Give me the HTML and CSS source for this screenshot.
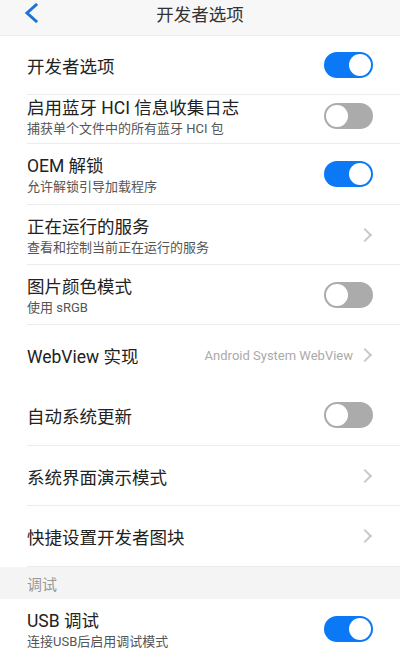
FILE: index.html
```html
<!DOCTYPE html>
<html lang="zh-CN">
<head>
  <meta charset="UTF-8">
  <meta name="viewport" content="width=device-width, initial-scale=1.0">
  <title>开发者选项</title>
  <link rel="stylesheet" href="styles.css">
</head>
<body>
<div class="topbar">
  <svg class="back" width="16" height="20" viewBox="0 0 16 20">
    <polyline points="12,2 3,10 12,18" fill="none" stroke="#1a74d6" stroke-width="3" stroke-linecap="square"/>
  </svg>
  <div class="topbar-title">开发者选项</div>
</div>

<div class="list">
  <div class="row r1">
    <div class="row-text"><div class="row-title">开发者选项</div></div>
    <div class="switch on"></div>
  </div>
  <div class="row r2">
    <div class="row-text">
      <div class="row-title">启用蓝牙 HCI 信息收集日志</div>
      <div class="row-sub">捕获单个文件中的所有蓝牙 HCI 包</div>
    </div>
    <div class="switch"></div>
  </div>
  <div class="row r3">
    <div class="row-text">
      <div class="row-title">OEM 解锁</div>
      <div class="row-sub">允许解锁引导加载程序</div>
    </div>
    <div class="switch on"></div>
  </div>
  <div class="row">
    <div class="row-text">
      <div class="row-title">正在运行的服务</div>
      <div class="row-sub">查看和控制当前正在运行的服务</div>
    </div>
    <span class="chevron"></span>
  </div>
  <div class="row">
    <div class="row-text">
      <div class="row-title">图片颜色模式</div>
      <div class="row-sub">使用 sRGB</div>
    </div>
    <div class="switch"></div>
  </div>
  <div class="row no-line">
    <div class="row-text"><div class="row-title">WebView 实现</div></div>
    <span class="row-value">Android System WebView</span>
    <span class="chevron"></span>
  </div>
  <div class="row r7">
    <div class="row-text"><div class="row-title">自动系统更新</div></div>
    <div class="switch"></div>
  </div>
  <div class="row">
    <div class="row-text"><div class="row-title">系统界面演示模式</div></div>
    <span class="chevron"></span>
  </div>
  <div class="row r9">
    <div class="row-text"><div class="row-title">快捷设置开发者图块</div></div>
    <span class="chevron"></span>
  </div>

  <div class="section">调试</div>

  <div class="row no-line">
    <div class="row-text">
      <div class="row-title">USB 调试</div>
      <div class="row-sub">连接USB后启用调试模式</div>
    </div>
    <div class="switch on"></div>
  </div>
</div>
</body>
</html>
```

FILE: styles.css
```css
body {
  margin: 0;
  background: #fff;
  font-family: Roboto, "Noto Sans CJK SC", sans-serif;
  color: #222;
  overflow: hidden;
}
.topbar {
  position: relative;
  height: 36px;
  padding-bottom: 8px;
  box-sizing: border-box;
  background: #f7f7f7;
  border-bottom: 1px solid #ececec;
  display: flex;
  align-items: center;
  justify-content: center;
}
.back {
  position: absolute;
  left: 24px;
  top: 3px;
}
.topbar-title {
  font-size: 17.5px;
  color: #333;
}
.row {
  height: 60px;
  margin-left: 27px;
  padding-right: 27px;
  box-sizing: border-box;
  border-bottom: 1px solid #ececec;
  display: flex;
  align-items: center;
}
.row.no-line {
  border-bottom: none;
}
.r1 { height: 59px; }
.r2 { height: 49px; padding-bottom: 6px; }
.r3 { height: 61px; }
.r7 { height: 61px; }
.r9 { height: 61px; }
.row-text {
  flex: 1;
  padding-top: 4px;
}
.row-title {
  font-size: 17.5px;
  line-height: 22px;
  color: #222;
}
.row-sub {
  font-size: 13px;
  line-height: 20px;
  color: #555;
}
.row-value {
  font-size: 13px;
  color: #aaa;
  margin-right: 7px;
}
.chevron {
  width: 8px;
  height: 8px;
  border-top: 2px solid #c9c9c9;
  border-right: 2px solid #c9c9c9;
  transform: rotate(45deg);
  margin-right: 3px;
}
.switch {
  position: relative;
  width: 49px;
  height: 26px;
  border-radius: 13px;
  background: #ababab;
}
.switch::after {
  content: "";
  position: absolute;
  top: 2px;
  left: 2px;
  width: 22px;
  height: 22px;
  border-radius: 50%;
  background: #fff;
}
.switch.on {
  background: #0b79f5;
}
.switch.on::after {
  left: 25px;
}
.section {
  height: 32px;
  padding-left: 27px;
  background: #f4f4f4;
  color: #999;
  font-size: 15px;
  display: flex;
  align-items: center;
}
```
